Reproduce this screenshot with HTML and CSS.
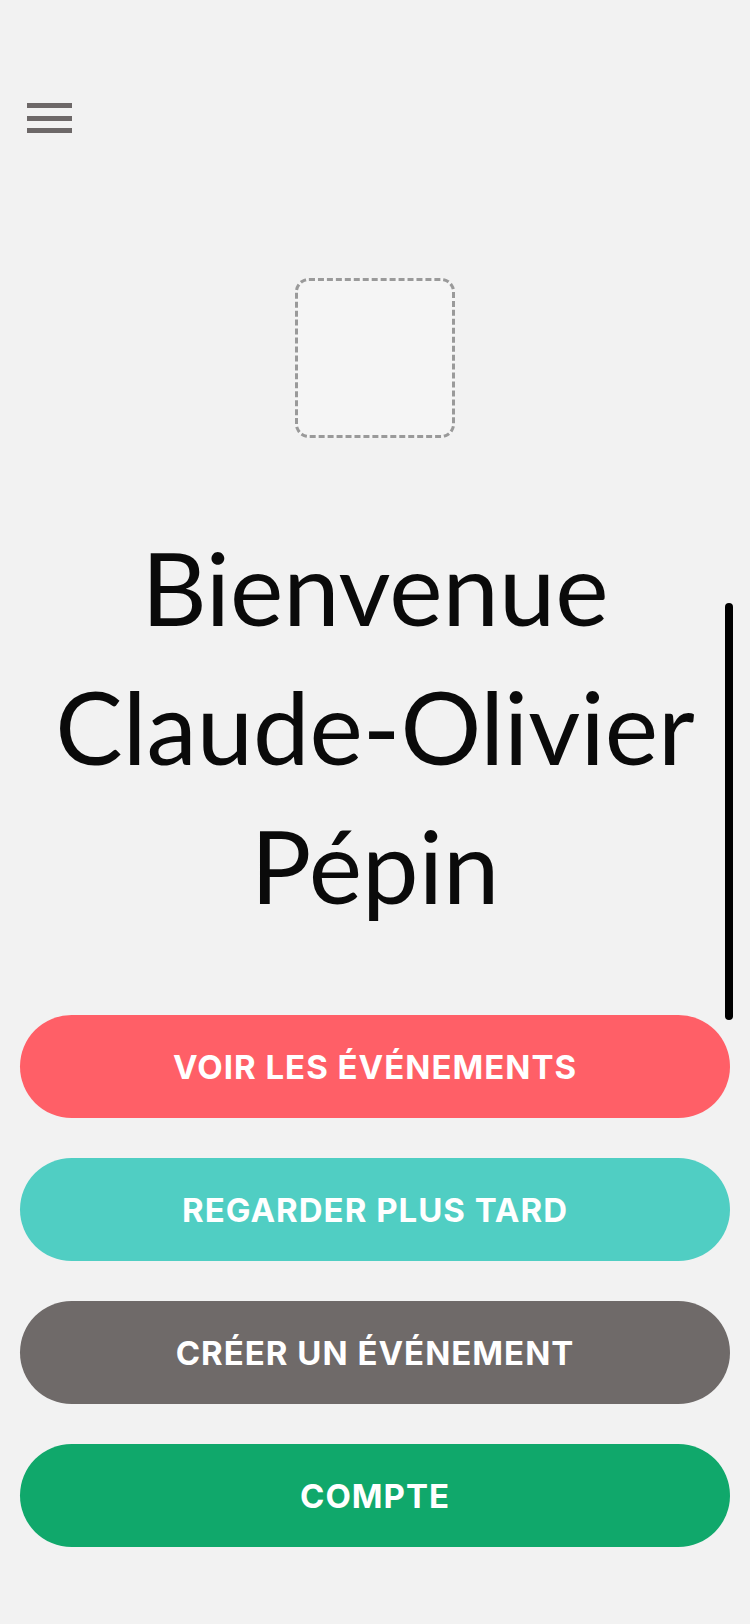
FILE: index.html
```html
<!DOCTYPE html>
<html lang="fr">
<head>
<meta charset="utf-8">
<title>Accueil</title>
<link rel="stylesheet" href="styles.css">
</head>
<body>
<div class="screen">
  <header class="topbar">
    <button class="menu" aria-label="Menu">
      <span class="bar"></span><span class="bar"></span><span class="bar"></span>
    </button>
  </header>
  <div class="logo-wrap">
    <div class="logo"></div>
  </div>
  <h1 class="welcome">
    <span class="line">Bienvenue</span>
    <span class="line">Claude-Olivier</span>
    <span class="line">Pépin</span>
  </h1>
  <nav class="actions">
    <a class="btn btn-red" href="#">VOIR LES ÉVÉNEMENTS</a>
    <a class="btn btn-teal" href="#">REGARDER PLUS TARD</a>
    <a class="btn btn-gray" href="#">CRÉER UN ÉVÉNEMENT</a>
    <a class="btn btn-green" href="#">COMPTE</a>
  </nav>
  <div class="scrollbar"></div>
</div>
</body>
</html>
```
FILE: styles.css
```css
html, body {
  margin: 0;
  padding: 0;
  background: #f2f2f2;
}
.screen {
  position: relative;
  width: 750px;
  height: 1624px;
  overflow: hidden;
  background: #f2f2f2;
  font-family: Lato, "Noto Sans", sans-serif;
}
.topbar {
  padding: 103px 0 0 27px;
  height: 30px;
}
.menu {
  display: flex;
  flex-direction: column;
  gap: 7.5px;
  width: 45px;
  padding: 0;
  margin: 0;
  border: 0;
  background: none;
}
.bar {
  display: block;
  width: 45px;
  height: 5px;
  background: #6d6868;
}
.logo-wrap {
  display: flex;
  justify-content: center;
  margin-top: 145px;
}
.logo {
  width: 154px;
  height: 154px;
  border: 3px dashed #9a9a9a;
  border-radius: 14px;
  background: #f5f5f5;
}
.welcome {
  margin: 80px 0 0;
  text-align: center;
  font-weight: 400;
  font-size: 101px;
  line-height: 139px;
  color: #0a0a0a;
}
.line {
  display: block;
}
.actions {
  display: flex;
  flex-direction: column;
  gap: 40px;
  padding: 0 20px;
  margin-top: 80px;
}
.btn {
  display: flex;
  align-items: center;
  justify-content: center;
  height: 103px;
  border-radius: 52px;
  color: #ffffff;
  text-decoration: none;
  font-family: Inter, "Noto Sans", sans-serif;
  font-weight: 700;
  font-size: 33px;
  letter-spacing: 1px;
}
.btn-red { background: #ff5f67; }
.btn-teal { background: #50cec3; }
.btn-gray { background: #6f6a69; }
.btn-green { background: #10a86b; }
.scrollbar {
  position: absolute;
  left: 725px;
  top: 603px;
  width: 8px;
  height: 417px;
  border-radius: 4px;
  background: #000;
}
```
